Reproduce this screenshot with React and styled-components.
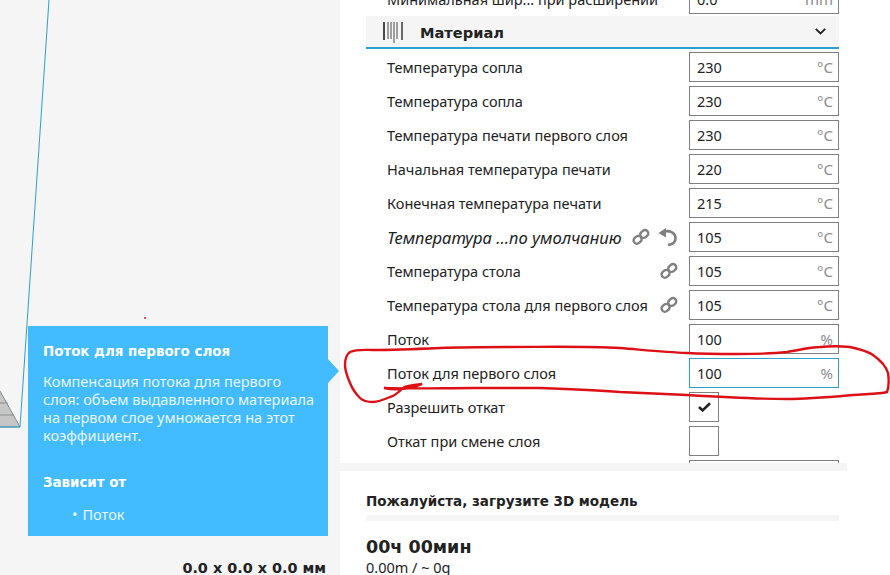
import React from "react";
import styled, { createGlobalStyle } from "styled-components";

const materialRows = [
  { label: "Минимальная шир... при расширении", value: "0.0", unit: "mm" },
  { type: "header" },
  { label: "Температура сопла", value: "230", unit: "°C" },
  { label: "Температура сопла", value: "230", unit: "°C" },
  { label: "Температура печати первого слоя", value: "230", unit: "°C" },
  { label: "Начальная температура печати", value: "220", unit: "°C" },
  { label: "Конечная температура печати", value: "215", unit: "°C" },
  { label: "Температура ...по умолчанию", value: "105", unit: "°C", italic: true, link: true, reset: true },
  { label: "Температура стола", value: "105", unit: "°C", link: true },
  { label: "Температура стола для первого слоя", value: "105", unit: "°C", link: true },
  { label: "Поток", value: "100", unit: "%" },
  { label: "Поток для первого слоя", value: "100", unit: "%", active: true },
  { label: "Разрешить откат", checked: true, type: "check" },
  { label: "Откат при смене слоя", type: "check" },
  { label: "", value: "", unit: "" },
];

const GlobalStyle = createGlobalStyle`
  html, body {
    margin: 0;
    padding: 0;
    background: #fff;
  }
  body {
    font-family: "Noto Sans", Tahoma, sans-serif;
    color: #222;
    overflow: hidden;
  }
`;

const Page = styled.div`
  position: relative;
  display: flex;
  width: 890px;
  height: 575px;
  overflow: hidden;
`;

const Viewport = styled.div`
  position: relative;
  width: 340px;
  background: #f5f5f5;
`;

const SizeLabel = styled.div`
  position: absolute;
  right: 14px;
  bottom: -1px;
  height: 16px;
  font-family: "DejaVu Sans", sans-serif;
  font-size: 14.4px;
  font-weight: bold;
  line-height: 16px;
  white-space: nowrap;
`;

const Tooltip = styled.div`
  position: absolute;
  left: 28px;
  top: 326px;
  box-sizing: border-box;
  width: 300px;
  height: 210px;
  padding: 17px 10px 17px 15px;
  background: #42bcff;
  color: #fff;
  font-size: 14.5px;
  line-height: 18px;

  &::after {
    content: "";
    position: absolute;
    left: 100%;
    top: 33px;
    border-style: solid;
    border-width: 12px 0 12px 11px;
    border-color: transparent transparent transparent #42bcff;
  }
`;

const TooltipTitle = styled.div`
  font-family: "DejaVu Sans", sans-serif;
  font-size: 13.4px;
  font-weight: bold;
`;

const TooltipText = styled.div`
  margin-top: 11px;
  color: #e8f6ff;
`;

const TooltipSubtitle = styled.div`
  margin-top: 30px;
  font-family: "DejaVu Sans", sans-serif;
  font-size: 13.4px;
  font-weight: bold;
`;

const TooltipList = styled.ul`
  margin: 13px 0 0;
  padding: 0 0 0 29px;
  color: #e8f6ff;
  list-style: none;

  li::before {
    content: "•";
    margin-right: 5px;
  }
`;

const Sidebar = styled.div`
  display: flex;
  flex-direction: column;
  width: 507px;
`;

const SettingsPane = styled.div`
  height: 463px;
  padding: 0 8px 0 26px;
  overflow: hidden;
`;

const SettingsList = styled.div`
  margin-top: -16px;
`;

const Row = styled.div`
  display: flex;
  align-items: center;
  height: 30px;
  margin-bottom: 4px;
  padding-left: 21px;
`;

const RowLabel = styled.div`
  flex: 1;
  font-size: ${(p) => (p.$italic ? "16.6px" : "14.5px")};
  font-style: ${(p) => (p.$italic ? "italic" : "normal")};
  white-space: nowrap;
`;

const RowIcons = styled.div`
  display: flex;
  align-items: center;
  gap: 8px;
  margin-right: 11px;
  color: #808080;
`;

const Field = styled.div`
  display: flex;
  align-items: center;
  justify-content: space-between;
  box-sizing: border-box;
  width: 150px;
  height: 30px;
  padding: 0 5px 0 7px;
  border: 1px solid ${(p) => (p.$active ? "#2f9fc6" : "#7f7f7f")};
  font-size: 14.5px;
`;

const Unit = styled.span`
  color: #8c8c8c;
  font-size: 15px;
`;

const CheckBox = styled.div`
  display: flex;
  align-items: center;
  justify-content: center;
  box-sizing: border-box;
  width: 30px;
  height: 30px;
  margin-right: 120px;
  border: 1px solid #7f7f7f;
`;

const SectionHeader = styled.div`
  display: flex;
  align-items: center;
  box-sizing: border-box;
  height: 33px;
  margin: -2px 0 3px;
  padding: 0 13px 0 17px;
  background: #f5f5f5;
  border-bottom: 2px solid #2f9fd0;
`;

const SectionTitle = styled.div`
  flex: 1;
  margin-left: 17px;
  padding-top: 1px;
  font-family: "DejaVu Sans", sans-serif;
  font-size: 14.6px;
  font-weight: bold;
`;

const Band = styled.div`
  height: 8px;
  background: #f5f5f5;
`;

const Summary = styled.div`
  flex: 1;
  padding: 0 8px 0 26px;
`;

const SummaryTitle = styled.div`
  margin-top: 21px;
  font-family: "DejaVu Sans", sans-serif;
  font-size: 13.5px;
  font-weight: bold;
  line-height: 18px;
`;

const SummaryRule = styled.div`
  height: 6px;
  margin-top: 5px;
  background: #f5f5f5;
`;

const PrintTime = styled.div`
  margin-top: 15px;
  font-family: "DejaVu Sans", sans-serif;
  font-size: 17.5px;
  font-weight: bold;
  line-height: 22px;
`;

const PrintAmount = styled.div`
  margin-top: 2px;
  font-size: 14.5px;
  line-height: 15px;
`;

const Overlay = styled.svg`
  position: absolute;
  left: 0;
  top: 0;
  pointer-events: none;
`;

const ChainIcon = () => (
  <svg width="18" height="18" viewBox="0 0 18 18" fill="none" stroke="currentColor" strokeWidth="2.4">
    <rect x="1.5" y="8.5" width="8.5" height="6.6" rx="3.3" transform="rotate(-40 5.7 12)" />
    <rect x="8" y="2.7" width="8.5" height="6.6" rx="3.3" transform="rotate(-40 12.2 6)" />
  </svg>
);

const ResetIcon = () => (
  <svg width="20" height="18" viewBox="0 0 20 18" fill="none" stroke="currentColor">
    <path d="M6 3.5C12 2 17.5 5 17.5 10C17.5 14 14.5 16.5 10 17" strokeWidth="2.6" />
    <path d="M0.5 5 8 0v9.5z" fill="currentColor" stroke="none" />
  </svg>
);

const BarcodeIcon = () => (
  <svg width="20" height="22" viewBox="0 0 20 22" fill="none" stroke="#4a4a4a">
    <path d="M1 1v18" strokeWidth="2" />
    <path d="M5 1v17M8 1v17M14 1v17" strokeWidth="1" />
    <path d="M11 1v21" strokeWidth="1" />
    <path d="M19 1v18" strokeWidth="1.6" />
  </svg>
);

const ChevronIcon = () => (
  <svg width="11" height="7" viewBox="0 0 11 7" fill="none" stroke="#222" strokeWidth="1.8">
    <path d="M0.8 0.8 5.5 5.5l4.7-4.7" />
  </svg>
);

const CheckIcon = () => (
  <svg width="13" height="10" viewBox="0 0 13 10" fill="none" stroke="#222" strokeWidth="2.6">
    <path d="M1 5l3.6 3.4L12 1.2" />
  </svg>
);

// the model outline in the 3D view, drawn behind the tooltip
const ModelOutline = () => (
  <Overlay width="340" height="575">
    <path d="M-4 384 20 427H-4z" fill="#c6c6c6" stroke="#7b8a94" />
    <path d="M0 403H8M0 415H14" stroke="#8c8c8c" />
    <path d="M49 0 20 427H0" fill="none" stroke="#2f9fc6" />
    <circle cx="145" cy="318" r="1" fill="#d8202a" />
  </Overlay>
);

// hand drawn marker around the setting
const RedMarker = () => (
  <Overlay width="890" height="575">
    <path
      d="M384 388C395 390 405 390 422 384C412 385 405 386 403 388C398 393 394 396 390 397C383 400 378 402 373 402C367 402 363 401 360 398C354 392 352 388 350 383C347 376 345 371 345 365C345 358 347 354 350 352C357 349 365 350 373 350C395 350 418 349 440 348C465 347 485 347 507 347C545 347 585 346 620 348C645 350 665 352 687 353C705 354 720 354 737 354C755 354 770 354 787 352C800 350 810 347 820 347C830 346 840 346 850 347C860 349 867 351 873 355C880 360 886 366 888 373C889 380 889 387 887 392C880 394 866 394 853 395C830 397 808 399 787 399C755 399 720 397 687 395C665 394 642 393 620 392C595 390 568 389 540 388C518 388 495 388 473 388C443 388 413 389 384 388Z"
      fill="none"
      stroke="#dd1015"
      strokeWidth="2.4"
    />
  </Overlay>
);

const SettingRow = ({ row }) => {
  if (row.type === "header") {
    return (
      <SectionHeader>
        <BarcodeIcon />
        <SectionTitle>Материал</SectionTitle>
        <ChevronIcon />
      </SectionHeader>
    );
  }
  return (
    <Row>
      <RowLabel $italic={row.italic}>{row.label}</RowLabel>
      {(row.link || row.reset) && (
        <RowIcons>
          {row.link && <ChainIcon />}
          {row.reset && <ResetIcon />}
        </RowIcons>
      )}
      {row.type === "check" ? (
        <CheckBox>{row.checked && <CheckIcon />}</CheckBox>
      ) : (
        <Field $active={row.active}>
          <span>{row.value}</span>
          <Unit>{row.unit}</Unit>
        </Field>
      )}
    </Row>
  );
};

const App = () => (
  <Page>
    <GlobalStyle />
    <Viewport>
      <ModelOutline />
      <Tooltip>
        <TooltipTitle>Поток для первого слоя</TooltipTitle>
        <TooltipText>
          Компенсация потока для первого слоя: объем выдавленного материала на первом слое умножается на этот коэффициент.
        </TooltipText>
        <TooltipSubtitle>Зависит от</TooltipSubtitle>
        <TooltipList>
          <li>Поток</li>
        </TooltipList>
      </Tooltip>
      <SizeLabel>0.0 x 0.0 x 0.0 мм</SizeLabel>
    </Viewport>
    <Sidebar>
      <SettingsPane>
        <SettingsList>
          {materialRows.map((row, i) => (
            <SettingRow key={i} row={row} />
          ))}
        </SettingsList>
      </SettingsPane>
      <Band />
      <Summary>
        <SummaryTitle>Пожалуйста, загрузите 3D модель</SummaryTitle>
        <SummaryRule />
        <PrintTime>00ч 00мин</PrintTime>
        <PrintAmount>0.00m / ~ 0g</PrintAmount>
      </Summary>
    </Sidebar>
    <RedMarker />
  </Page>
);

export default App;
